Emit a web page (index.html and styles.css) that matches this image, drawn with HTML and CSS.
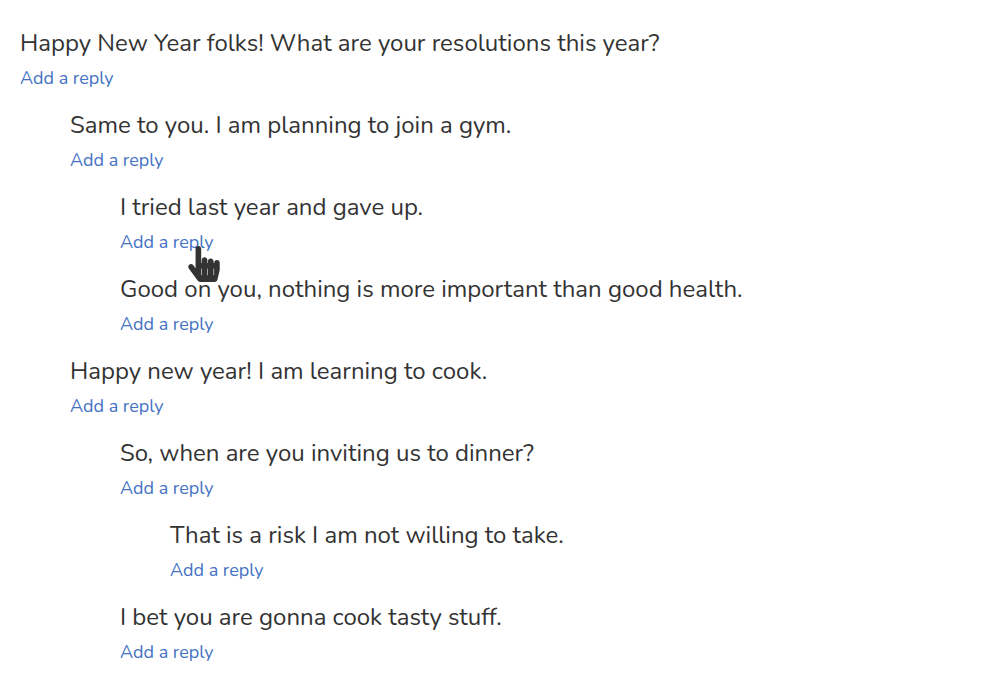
FILE: index.html
```html
<!DOCTYPE html>
<html lang="en">
<head>
<meta charset="utf-8">
<meta name="viewport" content="width=device-width, initial-scale=1">
<title>Comments</title>
<link rel="stylesheet" href="styles.css">
</head>
<body>
<main>
<ul class="thread">
  <li class="comment">
    <p class="text">Happy New Year folks! What are your resolutions this year?</p>
    <button class="reply" type="button">Add a reply</button>
    <ul class="thread nested">
      <li class="comment">
        <p class="text">Same to you. I am planning to join a gym.</p>
        <button class="reply" type="button">Add a reply</button>
        <ul class="thread nested">
          <li class="comment">
            <p class="text">I tried last year and gave up.</p>
            <button class="reply" type="button">Add a reply
              <svg class="pointer" viewBox="0 0 448 512" aria-hidden="true"><path fill="#333" d="M448 240v96c0 3.084-.356 6.159-1.063 9.162l-32 136C410.686 499.23 394.562 512 376 512H168a40.004 40.004 0 0 1-32.35-16.473l-127.997-176c-12.993-17.866-9.043-42.883 8.822-55.876 17.867-12.994 42.884-9.043 55.877 8.823L104 315.992V40c0-22.091 17.908-40 40-40s40 17.909 40 40v200h8v-40c0-22.091 17.908-40 40-40s40 17.909 40 40v40h8v-24c0-22.091 17.908-40 40-40s40 17.909 40 40v24h8c0-22.091 17.908-40 40-40s40 17.909 40 40zm-256 80h-8v96h8v-96zm88 0h-8v96h8v-96zm88 0h-8v96h8v-96z"/></svg>
            </button>
          </li>
          <li class="comment">
            <p class="text">Good on you, nothing is more important than good health.</p>
            <button class="reply" type="button">Add a reply</button>
          </li>
        </ul>
      </li>
      <li class="comment">
        <p class="text">Happy new year! I am learning to cook.</p>
        <button class="reply" type="button">Add a reply</button>
        <ul class="thread nested">
          <li class="comment">
            <p class="text">So, when are you inviting us to dinner?</p>
            <button class="reply" type="button">Add a reply</button>
            <ul class="thread nested">
              <li class="comment">
                <p class="text">That is a risk I am not willing to take.</p>
                <button class="reply" type="button">Add a reply</button>
              </li>
            </ul>
          </li>
          <li class="comment">
            <p class="text">I bet you are gonna cook tasty stuff.</p>
            <button class="reply" type="button">Add a reply</button>
          </li>
        </ul>
      </li>
    </ul>
  </li>
</ul>
</main>
</body>
</html>
```
FILE: styles.css
```css
* { box-sizing: border-box; }
body {
  margin: 0;
  padding: 25px 20px 16px;
  background: #fff;
  color: #333;
  font-family: Nunito, "Open Sans", sans-serif;
}
.thread {
  display: flex;
  flex-direction: column;
  gap: 16px;
  margin: 0;
  padding: 0;
  list-style: none;
}
.nested {
  align-self: stretch;
  margin-top: 16px;
  padding-left: 50px;
}
.comment { display: flex; flex-direction: column; align-items: flex-start; }
.text { margin: 0 0 4px; font-size: 24px; line-height: 36px; }
.reply {
  position: relative;
  margin: 0;
  padding: 0;
  border: 0;
  background: none;
  color: #4472c4;
  font: inherit;
  font-size: 18px;
  line-height: 26px;
  cursor: pointer;
}
.pointer {
  position: absolute;
  z-index: 1;
  top: 17px;
  left: 68px;
  width: 32px;
  height: 36px;
}
```
